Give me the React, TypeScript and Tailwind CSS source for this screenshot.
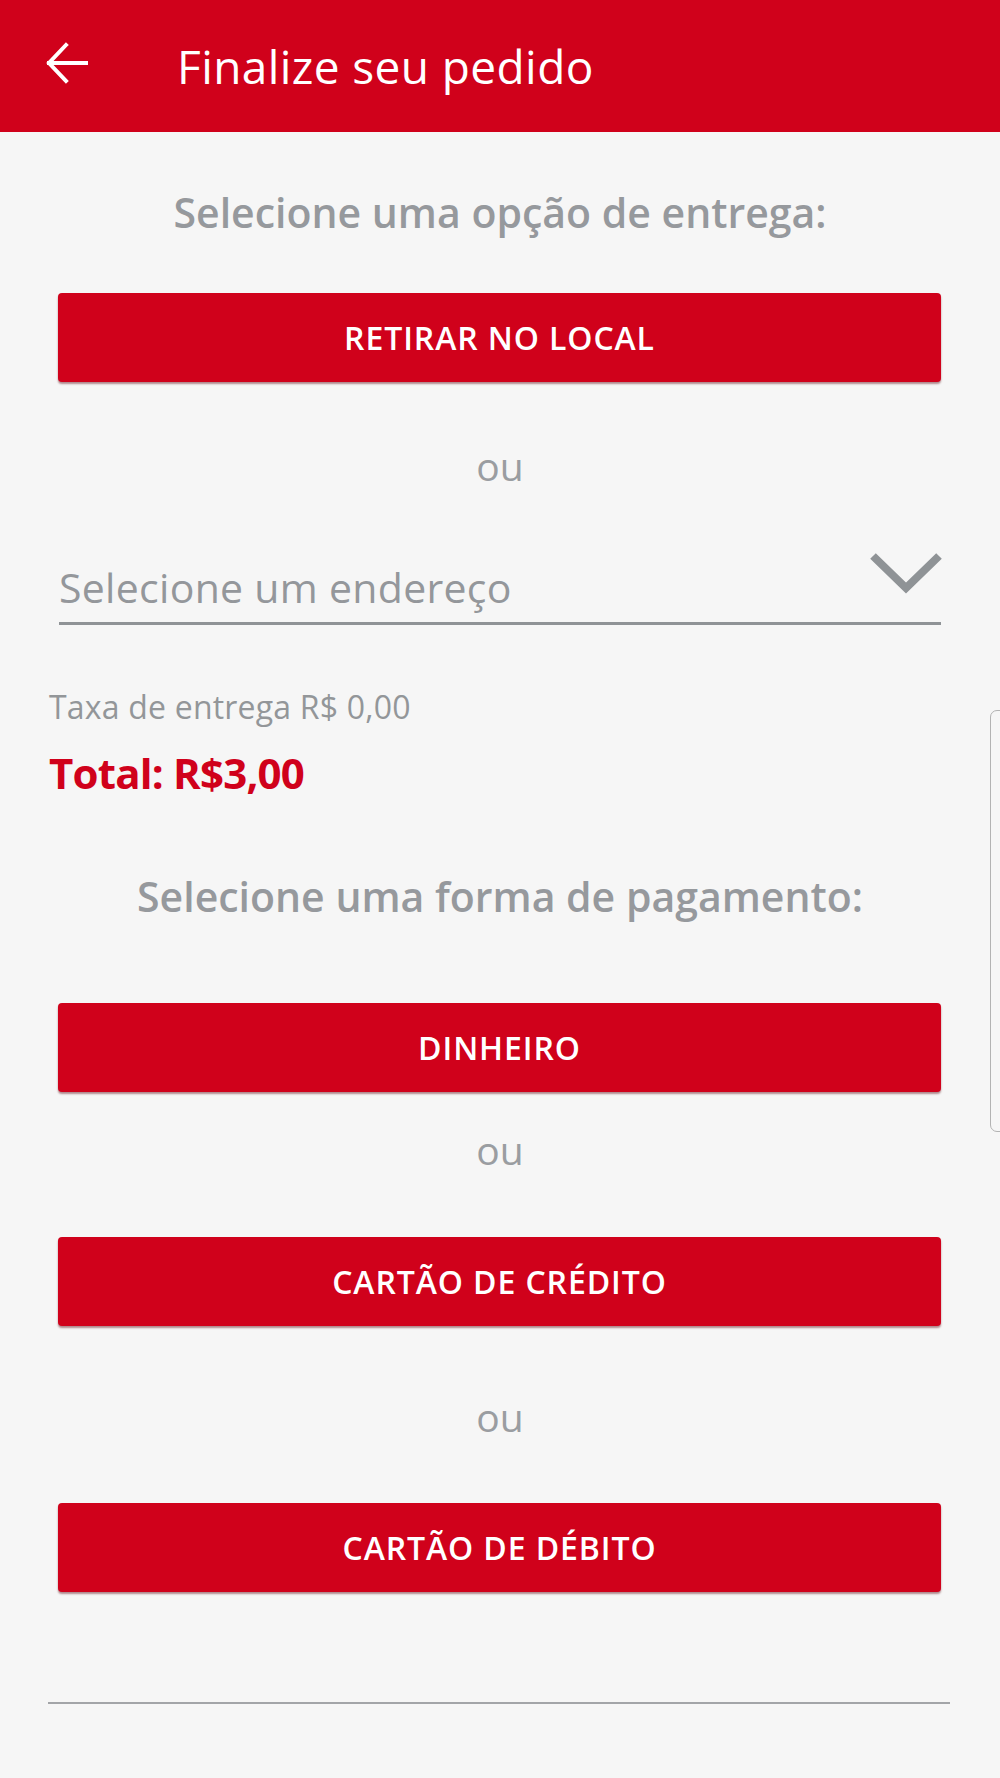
import React from "react";

const font = { fontFamily: "'Open Sans', Roboto, 'Noto Sans', sans-serif" };

function RedButton({ label, className = "" }: { label: string; className?: string }) {
  return (
    <button
      className={`mx-[58px] flex h-[89px] w-[883px] items-center justify-center rounded-[4px] bg-[#d0011b] text-[32px] font-semibold leading-none tracking-[0.9px] text-white shadow-[0_2px_2px_rgba(90,0,10,0.45)] ${className}`}
    >
      {label}
    </button>
  );
}

function Ou({ className = "" }: { className?: string }) {
  return (
    <div className={`text-center text-[39px] leading-[48px] text-[#9a9da1] ${className}`}>ou</div>
  );
}

export default function App() {
  return (
    <div className="relative min-h-[1778px] w-[1000px] overflow-hidden bg-[#f6f6f6]" style={font}>
      <header className="flex h-[132px] items-center bg-[#d0011b]">
        <svg className="ml-[45px] mt-[-6px]" width="44" height="42" viewBox="0 0 44 42" fill="none">
          <path d="M4 21 H41" stroke="white" strokeWidth="4" strokeLinecap="square" />
          <path d="M21 3 L4 21 L21 39" stroke="white" strokeWidth="4" strokeLinecap="square" strokeLinejoin="miter" />
        </svg>
        <h1 className="ml-[88px] text-[46px] font-normal leading-none tracking-[0.4px] text-white">
          Finalize seu pedido
        </h1>
      </header>

      <h2 className="mt-[55px] text-center text-[41px] font-semibold leading-[50px] tracking-[0px] text-[#96999d]">
        Selecione uma opção de entrega:
      </h2>

      <RedButton label="RETIRAR NO LOCAL" className="mt-[56px]" />

      <Ou className="mt-[60px]" />

      <div className="mx-[59px] mt-[62px] flex items-start justify-between border-b-[3px] border-[#8f9396] pb-[10px]">
        <span className="mt-[10px] text-[41px] leading-[50px] tracking-[0.3px] text-[#94979b]">
          Selecione um endereço
        </span>
        <svg className="mr-[-2px]" width="74" height="42" viewBox="0 0 74 42" fill="none">
          <path d="M4 4 L37 36 L70 4" stroke="#8f9396" strokeWidth="8" strokeLinejoin="miter" />
        </svg>
      </div>

      <div className="ml-[49px] mt-[63px] text-[32px] leading-[38px] tracking-[0.2px] text-[#939699]">
        Taxa de entrega R$ 0,00
      </div>

      <div className="ml-[49px] mt-[22px] text-[42px] font-bold leading-[50px] tracking-[-0.8px] text-[#d0011b]">
        Total: R$3,00
      </div>

      <h2 className="mt-[73px] text-center text-[41px] font-semibold leading-[50px] tracking-[0px] text-[#96999d]">
        Selecione uma forma de pagamento:
      </h2>

      <RedButton label="DINHEIRO" className="mt-[82px]" />

      <Ou className="mt-[34px]" />

      <RedButton label="CARTÃO DE CRÉDITO" className="mt-[63px]" />

      <Ou className="mt-[67px]" />

      <RedButton label="CARTÃO DE DÉBITO" className="mt-[62px]" />

      <div className="ml-[48px] mr-[50px] mt-[110px] h-[2px] bg-[#a3a5a8]" />

      <div className="absolute right-[-4px] top-[710px] h-[422px] w-[14px] rounded-l-[7px] border border-[#b3b3b3]" />
    </div>
  );
}
